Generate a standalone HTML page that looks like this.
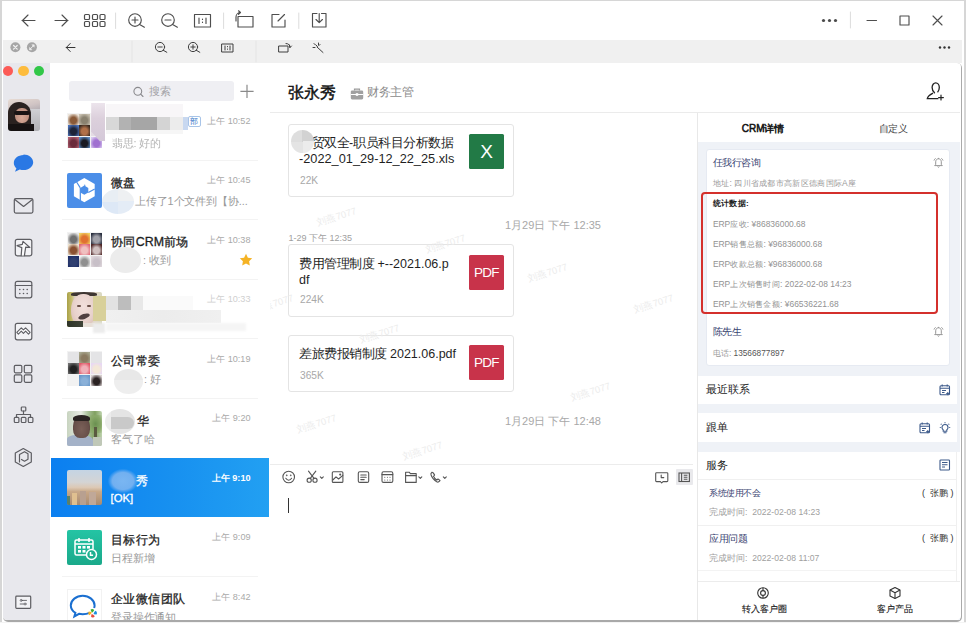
<!DOCTYPE html>
<html><head><meta charset="utf-8">
<style>
*{box-sizing:border-box}
html,body{margin:0;padding:0;width:966px;height:623px;overflow:hidden;background:#fff;font-family:"Liberation Sans",sans-serif;color:#222}
.a{position:absolute}
svg{position:absolute;overflow:visible}
.t{position:absolute;white-space:nowrap;line-height:1}
</style></head><body>
<!-- outer borders -->
<div class="a" style="left:0;top:0;width:966px;height:1.2px;background:#d6d6d6"></div>
<div class="a" style="left:0;top:0;width:1.6px;height:623px;background:#d6d6d6"></div>
<div class="a" style="left:964.4px;top:0;width:1.6px;height:623px;background:#d6d6d6"></div>

<!-- toolbar 1 -->
<svg width="966" height="40" style="left:0;top:0" fill="none" stroke="#4e4e4e" stroke-width="1.15" stroke-linecap="round" stroke-linejoin="round">
  <path d="M22 20.5h13M28 15l-5.5 5.5L28 26"/>
  <path d="M55 20.5h13M62 15l5.5 5.5L62 26"/>
  <g stroke-width="1.2"><rect x="84.5" y="14.5" width="5" height="5" rx="1"/><rect x="92.5" y="14.5" width="5" height="5" rx="1"/><rect x="100" y="14.5" width="5" height="5" rx="1"/>
  <rect x="84.5" y="21.5" width="5" height="5" rx="1"/><rect x="92.5" y="21.5" width="5" height="5" rx="1"/><rect x="100" y="21.5" width="5" height="5" rx="1"/></g>
  <path d="M115.6 13v15.5M223.6 13v15.5M298.8 13v15.5M850.4 12v16" stroke="#dcdcdc" stroke-width="1"/>
  <circle cx="135" cy="20" r="6.3"/><path d="M139.6 24.6l4.8 2.6M132 20h6M135 17v6"/>
  <circle cx="168" cy="20" r="6.3"/><path d="M172.6 24.6l4.8 2.6M165 20h6"/>
  <rect x="194.5" y="14.5" width="16" height="12.5"/><path d="M199 18v5.5M206 18v5.5M202.5 19v.5M202.5 22v.5"/>
  <rect x="238" y="16.5" width="15" height="10.5"/><path d="M236 21v-4c0-2.5 2-4.5 4.5-4.5M238.5 10.8l2 1.7-2 1.8"/>
  <path d="M279 14.5h-7v12.5h13v-7M278 21l6.5-6.5"/>
  <path d="M317 13.5h-4.5v13.5h13.5v-13.5h-4.5M319.2 13.5v9M316 19.5l3.2 3.2 3.2-3.2"/>
  <g fill="#4a4a4a" stroke="none"><circle cx="823.5" cy="20.5" r="1.6"/><circle cx="829.5" cy="20.5" r="1.6"/><circle cx="835.5" cy="20.5" r="1.6"/></g>
  <path d="M867 20.5h9.5"/>
  <rect x="900" y="16" width="9" height="9"/>
  <path d="M933 16l9 9M942 16l-9 9"/>
</svg>

<!-- toolbar 2 -->
<div class="a" style="left:3px;top:40px;width:959px;height:23px;background:#f0f0f0"></div>
<svg width="966" height="70" style="left:0;top:0" fill="none" stroke="#3e3e3e" stroke-width="1" stroke-linecap="round" stroke-linejoin="round">
  <circle cx="15.4" cy="47.3" r="5" fill="#a6a6a6" stroke="none"/><path d="M13.6 45.5l3.6 3.6M17.2 45.5l-3.6 3.6" stroke="#f0f0f0" stroke-width="1.3"/>
  <circle cx="31.9" cy="47.3" r="5" fill="#a6a6a6" stroke="none"/><path d="M30 49.2l3.8-3.8" stroke="#f0f0f0" stroke-width="1"/><path d="M32.2 44.8h2v2zM31.6 49.8h-2v-2z" fill="#f0f0f0" stroke="#f0f0f0" stroke-width=".6"/>
  <path d="M66.3 47.5h8.7M70.2 43.5l-3.9 4 3.9 4" stroke="#333" stroke-width="1"/>
  <path d="M132 41v21M256 41v21" stroke="#e4e4e4" stroke-width="1"/>
  <circle cx="160" cy="47" r="4.6"/><path d="M163.3 50.3l3.5 2M157.8 47h4.4"/>
  <circle cx="193" cy="47" r="4.6"/><path d="M196.3 50.3l3.5 2M190.8 47h4.4M193 44.8v4.4"/>
  <rect x="222" y="44" width="11" height="8"/><path d="M225 46v4M230 46v4M227.5 46.5v.3M227.5 49v.3"/>
  <rect x="279" y="46" width="9" height="6"/><path d="M286 43.5c2.5 0 4 1.5 4 4M289.5 45l.5 2.5 1.5-1.5"/>
  <path d="M317 47l6 5.5M314 43.5l1.5 1.5M318.5 43v2M313 47.5h2M316 45l1.5 1.5M320 44.5l-1 1"/>
  <g fill="#333" stroke="none"><circle cx="940" cy="47.5" r="1.2"/><circle cx="944.5" cy="47.5" r="1.2"/><circle cx="949" cy="47.5" r="1.2"/></g>
</svg>

<!-- app window -->
<div class="a" style="left:3px;top:63px;width:959px;height:559px;background:#aaaaaa;border-radius:0 5px 5px 5px"></div>
<div class="a" id="app" style="left:3px;top:63px;width:957.5px;height:557px;background:#fff;border-radius:0 4px 4px 4px;overflow:hidden">
</div>

<!-- sidebar -->
<div class="a" style="left:3px;top:63px;width:47px;height:557px;background:#e8e8ed;border-radius:0 0 0 4px"></div>
<div class="a" style="left:3px;top:66px;width:10px;height:11px;overflow:hidden"><div class="a" style="left:-0.5px;top:0.2px;width:10.3px;height:10.3px;border-radius:50%;background:#fc5b57"></div></div>
<div class="a" style="left:18.3px;top:66.2px;width:10.3px;height:10.3px;border-radius:50%;background:#fdbc3e"></div>
<div class="a" style="left:34px;top:66.2px;width:10.3px;height:10.3px;border-radius:50%;background:#31c748"></div>
<!-- user avatar -->
<div class="a" style="left:8px;top:98.5px;width:31.5px;height:32px;border-radius:3px;overflow:hidden;background:linear-gradient(165deg,#e8dcd4 0%,#d0c4c4 30%,#a8a4ac 55%,#c0c4cc 80%,#d8dce4 100%)">
 <div class="a" style="left:0;top:0;width:31.5px;height:32px;filter:blur(0.6px)">
  <div class="a" style="left:21px;top:10px;width:11px;height:22px;background:linear-gradient(180deg,#d0d0d4,#b0b0b4)"></div>
  <div class="a" style="left:0;top:3px;width:23px;height:29px;background:#2a2220;border-radius:11px 12px 3px 3px"></div>
  <div class="a" style="left:7px;top:9px;width:14px;height:15px;background:radial-gradient(ellipse at 50% 65%,#d8aa98 0,#b88a7a 80%);border-radius:45%"></div>
  <div class="a" style="left:6px;top:12px;width:16px;height:4.5px;background:#1a1414;border-radius:2px"></div>
  <div class="a" style="left:0;top:25px;width:26px;height:7px;background:#161212"></div>
 </div>
</div>
<svg width="60" height="623" style="left:0;top:0" fill="none" stroke="#5d5d62" stroke-width="1.2" stroke-linejoin="round" stroke-linecap="round">
  <path d="M23.5 154.5c5.4 0 9.7 3.5 9.7 7.8s-4.3 7.8-9.7 7.8c-1.3 0-2.6-.2-3.7-.6l-4.8 2.3 1.4-3.6c-1.6-1.4-2.6-3.3-2.6-5.3 0-4.3 4.3-7.9 9.7-7.9z" fill="#2a78e4" stroke="none"/>
  <rect x="14.3" y="198.6" width="18.6" height="14.5" rx="1.5"/><path d="M14.8 199.5l8.8 7 8.8-7"/>
  <rect x="15.3" y="239.3" width="16.5" height="16.5" rx="2" fill="#f2f2f5"/><path d="M21.2 255.6L21.8 247.6L17 245.7L22.3 244.3L23 241.4L29.8 247.5L25.7 247.2L24.4 255.6" fill="#fbfbfc"/>
  <rect x="15.3" y="281.3" width="16.5" height="16.5" rx="2"/><path d="M15.3 285.5h16.5"/><g fill="#5d5d62" stroke="none"><circle cx="19.8" cy="289.5" r=".8"/><circle cx="23.5" cy="289.5" r=".8"/><circle cx="27.2" cy="289.5" r=".8"/><circle cx="19.8" cy="293.5" r=".8"/><circle cx="23.5" cy="293.5" r=".8"/><circle cx="27.2" cy="293.5" r=".8"/></g>
  <rect x="15.3" y="323.3" width="16.5" height="16.5" rx="2" fill="#f2f2f5"/><path d="M16.8 332.4L21.3 327.8L23.4 329.9L25.6 327.8L30.1 332.4L28.5 334.1L25.6 331.2L23.4 333.4L21.3 331.2L18.4 334.1Z" fill="#fbfbfc" stroke-width="1.1"/>
  <rect x="14.3" y="365.3" width="7.5" height="7.5" rx="1.2"/><rect x="24.3" y="365.3" width="7.5" height="7.5" rx="1.2"/><rect x="14.3" y="374.8" width="7.5" height="7.5" rx="1.2"/><rect x="24.3" y="374.8" width="7.5" height="7.5" rx="1.2"/>
  <rect x="21.3" y="407" width="4.5" height="4" rx=".8"/><path d="M23.5 411v3.5M16.5 417v-2.5h14v2.5"/><rect x="14.3" y="417.3" width="4.6" height="5.2" rx="1"/><rect x="21.3" y="417.3" width="4.6" height="5.2" rx="1"/><rect x="28.3" y="417.3" width="4.6" height="5.2" rx="1"/>
  <path d="M23.3 448.5l8 4.5v9l-8 4.5-8-4.5v-9z"/><path d="M19.5 462v-7.5l5-2.8 3.5 2v5.5l-3.5 2-3-1.7"/>
  <rect x="15.8" y="596.2" width="14.9" height="12.2" rx="0.8" fill="#f3f3f6"/><circle cx="21.2" cy="600.4" r="1" stroke-width=".8"/><path d="M22.2 600.4h4.3M20.2 604h3.7" stroke-width=".9"/><circle cx="25.1" cy="604" r="1" stroke-width=".8"/>
</svg>

<div class="a" style="left:50px;top:63px;width:219.5px;height:557px;background:#fff"></div>
<div class="a" style="left:269.5px;top:63px;width:0.8px;height:557px;background:#ececec"></div>
<div class="a" style="left:68.7px;top:81.4px;width:165.3px;height:19.8px;background:#efeff3;border-radius:3px"></div>
<svg width="20" height="20" style="left:130px;top:82px" fill="none" stroke="#8a8a8e" stroke-width="1.1"><circle cx="7.8" cy="9.3" r="3.9"/><path d="M10.7 12.2l2.3 2.3" stroke-linecap="round"/></svg>
<div class="t" style="left:149px;top:85.80px;font-size:11px;line-height:11px;color:#a2a2a6;font-weight:400;">搜索</div>
<svg width="20" height="20" style="left:237px;top:81px" fill="none" stroke="#8a8a8a" stroke-width="1.2"><path d="M10 3.8v13.2M3.4 10.4h13.2"/></svg>
<div class="a" style="left:62px;top:159.7px;width:196px;height:0.8px;background:#f3f3f3"></div>
<div class="a" style="left:62px;top:219.2px;width:196px;height:0.8px;background:#f3f3f3"></div>
<div class="a" style="left:62px;top:278.7px;width:196px;height:0.8px;background:#f3f3f3"></div>
<div class="a" style="left:62px;top:338.2px;width:196px;height:0.8px;background:#f3f3f3"></div>
<div class="a" style="left:62px;top:397.7px;width:196px;height:0.8px;background:#f3f3f3"></div>
<div class="a" style="left:62px;top:576.2px;width:196px;height:0.8px;background:#f3f3f3"></div>
<div class="a" style="left:62px;top:635.7px;width:196px;height:0.8px;background:#f3f3f3"></div>
<div class="a" style="left:67px;top:113.0px;width:35px;height:35px;background:#f2f2f2"><div class="a" style="left:0.5px;top:0.5px;width:11px;height:11px;background:radial-gradient(ellipse 60% 65% at 50% 58%,#8a5a38 0,#8a5a38 45%,#ece4da 100%)"></div><div class="a" style="left:12.0px;top:0.5px;width:11px;height:11px;background:radial-gradient(ellipse 60% 65% at 50% 58%,#8a8270 0,#8a8270 45%,#c8c0b0 100%)"></div><div class="a" style="left:23.5px;top:0.5px;width:11px;height:11px;background:#e8e0e4"></div><div class="a" style="left:0.5px;top:12.0px;width:11px;height:11px;background:radial-gradient(ellipse 60% 65% at 50% 58%,#1e2438 0,#1e2438 45%,#4a70b8 100%)"></div><div class="a" style="left:12.0px;top:12.0px;width:11px;height:11px;background:radial-gradient(ellipse 60% 65% at 50% 58%,#b07048 0,#b07048 45%,#3a2a20 100%)"></div><div class="a" style="left:23.5px;top:12.0px;width:11px;height:11px;background:#e4dce4"></div><div class="a" style="left:0.5px;top:23.5px;width:11px;height:11px;background:radial-gradient(ellipse 60% 65% at 50% 58%,#6a2a3a 0,#6a2a3a 45%,#b06070 100%)"></div><div class="a" style="left:12.0px;top:23.5px;width:11px;height:11px;background:radial-gradient(ellipse 60% 65% at 50% 58%,#1a1a22 0,#1a1a22 45%,#5a88c0 100%)"></div><div class="a" style="left:23.5px;top:23.5px;width:11px;height:11px;background:radial-gradient(ellipse 60% 65% at 50% 58%,#a070d0 0,#a070d0 45%,#d8c8f0 100%)"></div></div>
<div class="a" style="left:91.2px;top:103.0px;width:14.3px;height:38px;background:linear-gradient(180deg,#ece4ec,#dcd0dc 40%,#d4c8d8);clip-path:polygon(0 0,100% 0,100% 100%,60% 100%,0 75%)"></div>
<div class="a" style="left:105.5px;top:116.8px;width:77.5px;height:13px;background:linear-gradient(90deg,#d8d8d8 0,#d8d8d8 16.7%,#b2b2b2 16.7%,#b2b2b2 33%,#a6a6a6 33%,#a6a6a6 66.5%,#d4d4d4 66.5%,#d4d4d4 83%,#ececec 83%);filter:blur(0.4px)"></div>
<div class="a" style="left:105.5px;top:103.5px;width:77.5px;height:13.3px;background:#f8f6f8"></div>
<div class="a" style="left:105.5px;top:129.8px;width:77.5px;height:4px;background:#f6f6f6"></div>
<div class="a" style="left:183px;top:116.8px;width:5px;height:13px;background:#c8d8f0"></div>
<div class="a" style="left:187.5px;top:116.0px;width:13.5px;height:10.5px;border:1px solid #a8c4e8;border-radius:2px;background:#fff"></div>
<div class="t" style="left:190px;top:117.75px;font-size:7.5px;line-height:7.5px;color:#3a78c8;font-weight:400;">部</div>
<div class="t" style="right:715.5px;top:116.65px;font-size:9.1px;line-height:9.1px;color:#a9a9a9;font-weight:400;">上午 10:52</div>
<div class="t" style="left:111.5px;top:137.60px;font-size:10.8px;line-height:10.8px;color:#b4b4b4;font-weight:400;filter:blur(0.7px)">翡思: 好的</div>
<div class="a" style="left:67px;top:172.7px;width:35px;height:35px;background:#4b8ee8;border-radius:2px"></div>
<svg width="35" height="35" style="left:67px;top:172.7px"><path d="M17.3 5l10.4 6v12.2l-10.4 6-10.4-6V11z" fill="#fff"/><path d="M17.3 12.6l4 2.3v4.6l-4 2.3-4-2.3v-4.6z" fill="#4b8ee8"/><path d="M13.3 14.9v13M13.3 14.9L9.6 9M21.3 19.5l6.4-3.6M17.3 12.6l1 -.6" stroke="#4b8ee8" stroke-width="1.2" fill="none"/></svg>
<div class="t" style="left:111px;top:176.80px;font-size:12.4px;line-height:12.4px;color:#1f1f1f;font-weight:400;;-webkit-text-stroke:0.3px #1f1f1f"><span style="font-size:12px;letter-spacing:0.4px">微盘</span></div>
<div class="t" style="right:715.5px;top:176.15px;font-size:9.1px;line-height:9.1px;color:#a9a9a9;font-weight:400;">上午 10:45</div>
<div class="t" style="left:135px;top:195.90px;font-size:10.8px;line-height:10.8px;color:#9a9a9a;font-weight:400;"><span style="font-size:11px;letter-spacing:-0.15px">上传了</span>1<span style="font-size:11px;letter-spacing:-0.15px">个文件到【协</span>...</div>
<div class="a" style="left:102px;top:188.5px;width:32px;height:25px;border-radius:50%;background:conic-gradient(#eef0f2 0 90deg,#e4ecf6 90deg 180deg,#dde8f6 180deg 270deg,#e8eef4 270deg);filter:blur(0.5px)"></div>
<div class="a" style="left:67px;top:232.2px;width:35px;height:35px;background:#f2f2f2"><div class="a" style="left:0.5px;top:0.5px;width:11px;height:11px;background:radial-gradient(ellipse 60% 65% at 50% 58%,#707070 0,#707070 45%,#e8e8e8 100%)"></div><div class="a" style="left:12.0px;top:0.5px;width:11px;height:11px;background:radial-gradient(ellipse 60% 65% at 50% 58%,#e07030 0,#e07030 45%,#f0d060 100%)"></div><div class="a" style="left:23.5px;top:0.5px;width:11px;height:11px;background:radial-gradient(ellipse 60% 65% at 50% 58%,#a0a0a8 0,#a0a0a8 45%,#2a3040 100%)"></div><div class="a" style="left:0.5px;top:12.0px;width:11px;height:11px;background:radial-gradient(ellipse 60% 65% at 50% 58%,#8a5030 0,#8a5030 45%,#ece0cc 100%)"></div><div class="a" style="left:12.0px;top:12.0px;width:11px;height:11px;background:radial-gradient(ellipse 60% 65% at 50% 58%,#f0c0c0 0,#f0c0c0 45%,#e06878 100%)"></div><div class="a" style="left:23.5px;top:12.0px;width:11px;height:11px;background:radial-gradient(ellipse 60% 65% at 50% 58%,#d0c0c0 0,#d0c0c0 45%,#502828 100%)"></div><div class="a" style="left:0.5px;top:23.5px;width:11px;height:11px;background:radial-gradient(ellipse 60% 65% at 50% 58%,#304070 0,#304070 45%,#1e2e68 100%)"></div><div class="a" style="left:12.0px;top:23.5px;width:11px;height:11px;background:radial-gradient(ellipse 60% 65% at 50% 58%,#909090 0,#909090 45%,#f0f0f0 100%)"></div><div class="a" style="left:23.5px;top:23.5px;width:11px;height:11px;background:radial-gradient(ellipse 60% 65% at 50% 58%,#c8c0c8 0,#c8c0c8 45%,#e0d8dc 100%)"></div></div>
<div class="t" style="left:111px;top:236.30px;font-size:12.4px;line-height:12.4px;color:#1f1f1f;font-weight:400;;-webkit-text-stroke:0.3px #1f1f1f"><span style="font-size:12px;letter-spacing:0.4px">协同</span>CRM<span style="font-size:12px;letter-spacing:0.4px">前场</span></div>
<div class="t" style="right:715.5px;top:235.65px;font-size:9.1px;line-height:9.1px;color:#a9a9a9;font-weight:400;">上午 10:38</div>
<div class="t" style="left:143px;top:255.40px;font-size:10.8px;line-height:10.8px;color:#9a9a9a;font-weight:400;">: <span style="font-size:11px;letter-spacing:-0.15px">收到</span></div>
<div class="a" style="left:109.8px;top:247.3px;width:31.6px;height:25.3px;border-radius:50%;background:#ececec;filter:blur(0.4px)"></div>
<svg width="14" height="14" style="left:239px;top:253.0px"><path d="M7 0.8l1.9 3.9 4.3.6-3.1 3 .7 4.3L7 10.6l-3.8 2 .7-4.3-3.1-3 4.3-.6z" fill="#f5b324"/></svg>
<div class="a" style="left:67px;top:291.5px;width:35px;height:35px;border-radius:2px;overflow:hidden;filter:blur(0.35px);background:linear-gradient(90deg,#a8a048 0,#c8c070 14%,#d8cfc0 22%,#e4d4cc 60%,#e0d8c8 85%,#d8d8c0 100%)">
<div class="a" style="left:4px;top:0;width:26px;height:4px;background:#3e3632;border-radius:50% 50% 20% 20%"></div>
<div class="a" style="left:4px;top:2px;width:25px;height:32px;background:radial-gradient(ellipse at 50% 40%,#f2e0dc 0,#e8d2cc 55%,#d4b8ae 100%);border-radius:48% 48% 45% 45%"></div>
<div class="a" style="left:10px;top:13.5px;width:3.5px;height:1.8px;background:#6a5048;border-radius:1px"></div><div class="a" style="left:20px;top:13.5px;width:3.5px;height:1.8px;background:#6a5048;border-radius:1px"></div>
<div class="a" style="left:11px;top:22px;width:12px;height:5px;background:#504040;border-radius:50%;transform:rotate(-18deg)"></div>
<div class="a" style="left:0;top:29px;width:16px;height:6px;background:linear-gradient(90deg,#2e3428,#404438)"></div>
<div class="a" style="left:16px;top:31px;width:12px;height:4px;background:#e8e0d8"></div>
</div><div class="a" style="left:93px;top:296.0px;width:13px;height:25px;background:#d8d09a;filter:blur(0.4px)"></div>
<div class="a" style="left:93px;top:323.0px;width:12px;height:10px;background:#ececec;filter:blur(0.8px)"></div>
<div class="a" style="left:105.8px;top:296.0px;width:37.6px;height:13.5px;background:linear-gradient(90deg,#e2e2e2 0,#e2e2e2 32%,#bdbdbd 32%,#bdbdbd 67%,#e8e8e8 67%);filter:blur(0.5px)"></div>
<div class="a" style="left:143.4px;top:296.0px;width:50px;height:13.5px;background:#fafafa;filter:blur(0.5px)"></div>
<div class="a" style="left:105.8px;top:309.5px;width:115px;height:13px;background:linear-gradient(90deg,#f0f0f0,#ececec 50%,#f0f0f0);filter:blur(0.6px)"></div>
<div class="a" style="left:105.8px;top:322.5px;width:140px;height:8px;background:#f5f5f5;filter:blur(0.8px)"></div>
<div class="t" style="right:715.5px;top:295.15px;font-size:9.1px;line-height:9.1px;color:#cfcfcf;font-weight:400;">上午 10:33</div>
<div class="a" style="left:67px;top:351.2px;width:35px;height:35px;background:#f2f2f2"><div class="a" style="left:0.5px;top:0.5px;width:11px;height:11px;background:#e4e4e6"></div><div class="a" style="left:12.0px;top:0.5px;width:11px;height:11px;background:radial-gradient(ellipse 60% 65% at 50% 58%,#8a7a60 0,#8a7a60 45%,#a8a890 100%)"></div><div class="a" style="left:23.5px;top:0.5px;width:11px;height:11px;background:#e4e4e6"></div><div class="a" style="left:0.5px;top:12.0px;width:11px;height:11px;background:radial-gradient(ellipse 60% 65% at 50% 58%,#202020 0,#202020 45%,#707070 100%)"></div><div class="a" style="left:12.0px;top:12.0px;width:11px;height:11px;background:radial-gradient(ellipse 60% 65% at 50% 58%,#f0b0b8 0,#f0b0b8 45%,#e05868 100%)"></div><div class="a" style="left:23.5px;top:12.0px;width:11px;height:11px;background:radial-gradient(ellipse 60% 65% at 50% 58%,#f4e8d8 0,#f4e8d8 45%,#e8d8f4 100%)"></div><div class="a" style="left:0.5px;top:23.5px;width:11px;height:11px;background:radial-gradient(ellipse 60% 65% at 50% 58%,#b89070 0,#b89070 45%,linear-gradient(#d8c8b8,#a08060) 100%)"></div><div class="a" style="left:12.0px;top:23.5px;width:11px;height:11px;background:radial-gradient(ellipse 60% 65% at 50% 58%,#8ab0d8 0,#8ab0d8 45%,#6a98c8 100%)"></div><div class="a" style="left:23.5px;top:23.5px;width:11px;height:11px;background:radial-gradient(ellipse 60% 65% at 50% 58%,#2a2222 0,#2a2222 45%,#d8d0d0 100%)"></div></div>
<div class="t" style="left:111px;top:355.30px;font-size:12.4px;line-height:12.4px;color:#1f1f1f;font-weight:400;;-webkit-text-stroke:0.3px #1f1f1f"><span style="font-size:12px;letter-spacing:0.4px">公司常委</span></div>
<div class="t" style="right:715.5px;top:354.65px;font-size:9.1px;line-height:9.1px;color:#a9a9a9;font-weight:400;">上午 10:19</div>
<div class="t" style="left:144px;top:374.40px;font-size:10.8px;line-height:10.8px;color:#9a9a9a;font-weight:400;">: <span style="font-size:11px;letter-spacing:-0.15px">好</span></div>
<div class="a" style="left:114px;top:369.0px;width:29px;height:24.5px;border-radius:50%;background:linear-gradient(180deg,#e8e8e8 0,#e8e8e8 45%,#eeeeee 45%);filter:blur(0.3px)"></div>
<div class="a" style="left:67px;top:410.5px;width:35px;height:35px;border-radius:2px;overflow:hidden;background:linear-gradient(90deg,#c8d4c0 0,#e8ece4 40%,#a8c098 60%,#80a060 80%,#c0d4b0 100%)">
<div class="a" style="left:0;top:0;width:35px;height:35px;filter:blur(0.5px)">
<div class="a" style="left:22px;top:4px;width:13px;height:18px;background:radial-gradient(ellipse,#6a9050 0,#88a868 60%,rgba(200,212,176,0) 100%)"></div>
<div class="a" style="left:27px;top:16px;width:3px;height:12px;background:#5a5a40"></div>
<div class="a" style="left:0;top:24px;width:26px;height:11px;background:#a4b2c8;border-radius:35% 45% 0 0"></div>
<div class="a" style="left:6px;top:5px;width:17px;height:22px;background:radial-gradient(ellipse at 50% 60%,#7a6058 0,#68504a 60%,#4a3a36 100%);border-radius:45% 45% 40% 40%"></div>
<div class="a" style="left:6px;top:4px;width:17px;height:6px;background:#2a2422;border-radius:50% 50% 20% 20%"></div>
<div class="a" style="left:26px;top:26px;width:9px;height:9px;background:#c0c8b8"></div>
</div>
</div><div class="t" style="left:137px;top:414.80px;font-size:12.4px;line-height:12.4px;color:#1f1f1f;font-weight:400;;-webkit-text-stroke:0.3px #1f1f1f"><span style="font-size:12px;letter-spacing:0.4px">华</span></div>
<div class="a" style="left:104.7px;top:409.3px;width:30px;height:25px;border-radius:50%;background:linear-gradient(90deg,#ececec 0,#ececec 20%,#e4e4e4 20%);filter:blur(0.4px)"></div>
<div class="a" style="left:111px;top:417.0px;width:23px;height:11.6px;background:#c9c9c9;border-radius:0 6px 6px 0;filter:blur(0.4px)"></div>
<div class="t" style="right:715.5px;top:414.15px;font-size:9.1px;line-height:9.1px;color:#a9a9a9;font-weight:400;">上午 9:20</div>
<div class="t" style="left:111px;top:433.90px;font-size:10.8px;line-height:10.8px;color:#9a9a9a;font-weight:400;"><span style="font-size:11px;letter-spacing:-0.15px">客气了哈</span></div>
<div class="a" style="left:50.8px;top:458.0px;width:218.5px;height:58.7px;background:linear-gradient(90deg,#0b7ff0 0%,#1790f0 55%,#22a0f2 100%)"></div>
<div class="a" style="left:67px;top:470.0px;width:35px;height:35px;border-radius:2px;overflow:hidden;background:linear-gradient(180deg,#c4d4e4 0%,#d4d4d4 35%,#dcc8b4 50%,#c8a888 62%,#a88a70 100%)">
<div class="a" style="left:5px;top:23px;width:5px;height:12px;background:#e0c090"></div><div class="a" style="left:13px;top:21px;width:6px;height:14px;background:#b8a090"></div><div class="a" style="left:22px;top:22px;width:7px;height:13px;background:#c0a898"></div><div class="a" style="left:0;top:26px;width:3px;height:9px;background:#5a8068"></div>
</div><div class="t" style="left:136px;top:474.50px;font-size:12.4px;line-height:12.4px;color:#fff;font-weight:400;;-webkit-text-stroke:0.3px #fff"><span style="font-size:12px;letter-spacing:0.4px">秀</span></div>
<div class="a" style="left:108px;top:468.5px;width:30px;height:24px;background:radial-gradient(ellipse,#7ab6f2 0,#72b0f0 50%,rgba(23,144,240,0) 72%)"></div>
<div class="t" style="left:110.5px;top:493.10px;font-size:11.4px;line-height:11.4px;color:#fff;font-weight:400;-webkit-text-stroke:0.3px #fff">[OK]</div>
<div class="t" style="right:715.5px;top:473.65px;font-size:9.1px;line-height:9.1px;color:#fff;font-weight:700;">上午 9:10</div>
<div class="a" style="left:67px;top:529.5px;width:35px;height:35px;background:linear-gradient(180deg,#24c4a4,#1aa98a);border-radius:2px"></div>
<svg width="35" height="35" style="left:67px;top:529.5px" fill="none" stroke="#fff" stroke-width="1.5"><path d="M21 25H9.5c-.8 0-1.5-.7-1.5-1.5V11.5c0-.8.7-1.5 1.5-1.5h15c.8 0 1.5.7 1.5 1.5V19"/><path d="M8 14h18M12 8v4M22 8v4"/><g fill="#fff" stroke="none"><rect x="11" y="16" width="3" height="2.6"/><rect x="15.5" y="16" width="3" height="2.6"/><rect x="20" y="16" width="3" height="2.6"/><rect x="11" y="20" width="3" height="2.6"/><rect x="15.5" y="20" width="3" height="2.6"/></g><circle cx="24.5" cy="24.5" r="5" fill="#1eb090"/><path d="M23.5 22v3.2h2.6"/></svg>
<div class="t" style="left:111px;top:533.80px;font-size:12.4px;line-height:12.4px;color:#1f1f1f;font-weight:400;;-webkit-text-stroke:0.3px #1f1f1f"><span style="font-size:12px;letter-spacing:0.4px">目标行为</span></div>
<div class="t" style="right:715.5px;top:533.15px;font-size:9.1px;line-height:9.1px;color:#a9a9a9;font-weight:400;">上午 9:09</div>
<div class="t" style="left:111px;top:552.90px;font-size:10.8px;line-height:10.8px;color:#9a9a9a;font-weight:400;"><span style="font-size:11px;letter-spacing:-0.15px">日程新增</span></div>
<div class="a" style="left:67px;top:589.0px;width:35px;height:35px;border:0.6px solid #f2f2f2"></div>
<svg width="35" height="35" style="left:67px;top:589.0px" fill="none" stroke="#1a6fd0" stroke-width="2"><path d="M22.5 23.8c-1.9.9-4.3 1.4-6.8 1.4-1.3 0-2.5-.1-3.7-.4l-4.6 2.6 1-3.6C5.6 22 3.8 19.4 3.8 16.4c0-5.3 5.4-9.6 11.9-9.6s11.9 4.3 11.9 9.6c0 .9-.2 1.8-.5 2.6"/><g stroke="none"><path d="M23.6 20.6c1.2-.9 2.9-.6 3.6.6l-1.6 2.4c-.8-.2-1.6-1-2-3z" fill="#3cb034"/><path d="M28.6 21.8c1.3.8 1.8 2.5 1 3.7l-2.9-.2c-.2-.8.2-1.9 1.9-3.5z" fill="#1a8ee0"/><path d="M27.8 27.2c-.8 1.3-2.5 1.7-3.7.9l.3-2.9c.8-.2 1.9.3 3.4 2z" fill="#e84a3a"/><path d="M22.4 26.2c-1.2-.9-1.5-2.6-.6-3.7l2.8.4c.2.8-.3 1.9-2.2 3.3z" fill="#f5b020"/></g></svg>
<div class="t" style="left:111px;top:593.30px;font-size:12.4px;line-height:12.4px;color:#1f1f1f;font-weight:400;;-webkit-text-stroke:0.3px #1f1f1f"><span style="font-size:12px;letter-spacing:0.4px">企业微信团队</span></div>
<div class="t" style="right:715.5px;top:592.65px;font-size:9.1px;line-height:9.1px;color:#a9a9a9;font-weight:400;">上午 8:42</div>
<div class="t" style="left:111px;top:612.40px;font-size:10.8px;line-height:10.8px;color:#9a9a9a;font-weight:400;"><span style="font-size:11px;letter-spacing:-0.15px">登录操作通知</span></div>
<div class="a" style="left:270px;top:63px;width:686px;height:49.5px;background:#fff"></div>
<div class="a" style="left:270px;top:112.2px;width:690px;height:0.9px;background:#ebebeb"></div>
<div class="t" style="left:288px;top:84.50px;font-size:16px;line-height:16px;color:#111;font-weight:400;-webkit-text-stroke:0.45px #111">张永秀</div>
<svg width="14" height="14" style="left:350px;top:87px"><path d="M4.5 3.5V2.2h5v1.3" fill="none" stroke="#9a9a9a" stroke-width="1.2"/><rect x="0.8" y="3.4" width="12.4" height="9" rx="1.3" fill="#a0a0a0"/><rect x="0.8" y="7" width="12.4" height="1" fill="#fff"/><rect x="5.8" y="6.2" width="2.4" height="2.6" fill="#fff"/></svg>
<div class="t" style="left:367px;top:87.25px;font-size:11.5px;line-height:11.5px;color:#8a8a8a;font-weight:400;"><span style="font-size:12px;letter-spacing:-0.4px">财务主管</span></div>
<svg width="20" height="20" style="left:925px;top:81px" fill="none" stroke="#222" stroke-width="1.3" stroke-linecap="round"><path d="M9.5 11.8c-1.4-1.3-2.4-3.2-2.4-5.3 0-2.6 1.6-4.6 3.6-4.6s3.6 2 3.6 4.6c0 1.6-.6 3.1-1.5 4.3M7.6 12.3c-2.4 1.2-4.9 3-5.3 5.4h10.6"/><path d="M16 14.2v4.8M13.6 16.6h4.8" stroke-width="1.2"/></svg>
<div class="a" style="left:270px;top:113px;width:427px;height:351px;background:#fff"></div>
<div class="a" style="left:287.5px;top:124.4px;width:226.5px;height:72.2px;background:#fff;border:1px solid #e4e4e4;border-radius:3px"></div>
<div class="t" style="left:299px;top:136.55px;font-size:12.5px;line-height:12.5px;color:#1f1f1f;font-weight:400;"><span style="font-size:13px;letter-spacing:-0.5px">工贸双全</span>-<span style="font-size:13px;letter-spacing:-0.5px">职员科目分析数据</span></div>
<div class="t" style="left:299px;top:152.93px;font-size:12.75px;line-height:12.75px;color:#1f1f1f;font-weight:400;">-2022_01_29-12_22_25.xls</div>
<div class="t" style="left:300px;top:175.70px;font-size:10.2px;line-height:10.2px;color:#a8a8a8;font-weight:400;">22K</div>
<div class="a" style="left:291px;top:130.4px;width:23px;height:23px;border-radius:50%;background:conic-gradient(#d2d2d2 0 90deg,#ececec 90deg 180deg,#e4e4e4 180deg 270deg,#dedede 270deg)"></div>
<div class="a" style="left:469.3px;top:134.4px;width:34.8px;height:34.8px;background:#227a46;color:#fff;font-size:19px;line-height:35.5px;text-align:center;border-radius:1.5px">X</div><div class="t" style="right:365px;top:219.90px;font-size:11px;line-height:11px;color:#a8a8a8;font-weight:400;">1月29日 下午 12:35</div>
<div class="t" style="left:288.5px;top:234.00px;font-size:9px;line-height:9px;color:#a0a0a0;font-weight:400;">1-29 下午 12:35</div>
<div class="a" style="left:287.5px;top:244.4px;width:226.5px;height:72.6px;background:#fff;border:1px solid #e4e4e4;border-radius:3px"></div>
<div class="t" style="left:299px;top:257.75px;font-size:12.5px;line-height:12.5px;color:#1f1f1f;font-weight:400;"><span style="font-size:13px;letter-spacing:-0.5px">费用管理制度</span> +--2021.06.p</div>
<div class="t" style="left:299px;top:274.05px;font-size:12.5px;line-height:12.5px;color:#1f1f1f;font-weight:400;">df</div>
<div class="t" style="left:300px;top:295.40px;font-size:10.2px;line-height:10.2px;color:#a8a8a8;font-weight:400;">224K</div>
<div class="a" style="left:469px;top:255px;width:35.2px;height:34.6px;background:#c8334a;color:#fff;font-size:13.5px;letter-spacing:-0.7px;text-indent:-0.5px;line-height:36.6px;text-align:center;border-radius:1.5px">PDF</div><div class="a" style="left:287.5px;top:334.8px;width:226.5px;height:56.8px;background:#fff;border:1px solid #e4e4e4;border-radius:3px"></div>
<div class="t" style="left:299px;top:348.05px;font-size:12.5px;line-height:12.5px;color:#1f1f1f;font-weight:400;"><span style="font-size:13px;letter-spacing:-0.5px">差旅费报销制度</span> 2021.06.pdf</div>
<div class="t" style="left:300px;top:370.60px;font-size:10.2px;line-height:10.2px;color:#a8a8a8;font-weight:400;">365K</div>
<div class="a" style="left:469px;top:345.4px;width:35.2px;height:34.6px;background:#c8334a;color:#fff;font-size:13.5px;letter-spacing:-0.7px;text-indent:-0.5px;line-height:36.6px;text-align:center;border-radius:1.5px">PDF</div><div class="t" style="right:365px;top:415.90px;font-size:11px;line-height:11px;color:#a8a8a8;font-weight:400;">1月29日 下午 12:48</div>
<div class="a" style="left:270px;top:113px;width:426px;height:351px;overflow:hidden"><div class="t" style="left:46px;top:99px;font-size:9.5px;line-height:10px;color:#ececec;transform:rotate(-18deg)">刘燕7077</div>
<div class="t" style="left:155px;top:126px;font-size:9.5px;line-height:10px;color:#ececec;transform:rotate(-18deg)">刘燕7077</div>
<div class="t" style="left:257px;top:155px;font-size:9.5px;line-height:10px;color:#ececec;transform:rotate(-18deg)">刘燕7077</div>
<div class="t" style="left:363px;top:186px;font-size:9.5px;line-height:10px;color:#ececec;transform:rotate(-18deg)">刘燕7077</div>
<div class="t" style="left:89px;top:216px;font-size:9.5px;line-height:10px;color:#ececec;transform:rotate(-18deg)">刘燕7077</div>
<div class="t" style="left:300px;top:274px;font-size:9.5px;line-height:10px;color:#ececec;transform:rotate(-18deg)">刘燕7077</div>
<div class="t" style="left:26px;top:306px;font-size:9.5px;line-height:10px;color:#ececec;transform:rotate(-18deg)">刘燕7077</div>
<div class="t" style="left:132px;top:333px;font-size:9.5px;line-height:10px;color:#ececec;transform:rotate(-18deg)">刘燕7077</div>
<div class="t" style="left:-17px;top:186px;font-size:9.5px;line-height:10px;color:#ececec;transform:rotate(-18deg)">刘燕7077</div>
</div><div class="a" style="left:270px;top:464px;width:427px;height:156px;background:#fff"></div>
<div class="a" style="left:270px;top:463.8px;width:423px;height:0.9px;background:#ececec"></div>
<svg width="430" height="40" style="left:270px;top:460px" fill="none" stroke="#555" stroke-width="1.1" stroke-linecap="round" stroke-linejoin="round">
<circle cx="18.7" cy="17" r="5.8"/><path d="M15.8 18.3c.8 1.3 1.8 1.9 2.9 1.9s2.1-.6 2.9-1.9"/><circle cx="16.7" cy="15.3" r=".3" fill="#555"/><circle cx="20.7" cy="15.3" r=".3" fill="#555"/>
<circle cx="39.2" cy="20.2" r="2.1"/><circle cx="45" cy="20.2" r="2.1"/><path d="M40.3 18.4l5.5-7.3M44 18.4l-5.5-7.3M50.3 16.8l1.5 1.5 1.5-1.5"/>
<rect x="62.3" y="11.8" width="10.6" height="10.6" rx="1"/><path d="M62.8 20l3.2-3.2 2.6 2.2 4.2-3.6"/><circle cx="70.2" cy="14.6" r=".5" fill="#555"/>
<rect x="88.3" y="11.8" width="10.4" height="10.6" rx="1.5"/><path d="M90.8 15h5.4M90.8 17.3h5.4M90.8 19.6h3.4"/>
<rect x="112" y="11.8" width="10.8" height="10.6" rx="1.5"/><path d="M112 14.6h10.8"/><g fill="#555" stroke="none"><circle cx="114.8" cy="17.3" r=".55"/><circle cx="117.4" cy="17.3" r=".55"/><circle cx="120" cy="17.3" r=".55"/><circle cx="114.8" cy="20" r=".55"/><circle cx="117.4" cy="20" r=".55"/><circle cx="120" cy="20" r=".55"/></g>
<path d="M135.6 12.2h3.6l1.2 1.4h5.8v8.8h-10.6z"/><path d="M135.6 15.6h10.6"/><path d="M148.8 16.8l1.5 1.5 1.5-1.5"/>
<path d="M162 12.3c-.9.6-1.4 1.4-1 2.6.9 2.8 3 5.3 5.7 6.9 1.1.6 2.1.3 2.8-.6l.5-.8-2-1.4-1.2 1c-1.4-.8-2.6-2.2-3.3-3.8l1.1-1.1-1.3-2.2z"/><path d="M173.3 16.8l1.5 1.5 1.5-1.5"/>
<path d="M386.5 12.8h10.5c.5 0 .8.3.8.8v7.2c0 .5-.3.8-.8.8h-4l-1.3 1.4-1.3-1.4h-3.9c-.5 0-.8-.3-.8-.8v-7.2c0-.5.3-.8.8-.8z"/><path d="M391.2 15v2.6h2.6"/>
</svg>
<div class="a" style="left:676.4px;top:469.2px;width:16.2px;height:15.5px;background:#e9e9ec;border-radius:1px"></div>
<svg width="16" height="16" style="left:676.4px;top:469.2px" fill="none" stroke="#555" stroke-width="1.1"><rect x="3" y="4" width="10.4" height="8.5"/><path d="M5.6 4v8.5M7.8 6.2h3.6M7.8 8.2h3.6M7.8 10.2h3.6"/></svg>
<div class="a" style="left:288px;top:498px;width:1.2px;height:15.4px;background:#333"></div>
<div class="a" style="left:697px;top:113px;width:263px;height:507px;background:#eff2f7"></div>
<div class="a" style="left:696.8px;top:113px;width:0.8px;height:507px;background:#e8e8e8"></div>
<div class="a" style="left:697.6px;top:113px;width:262.4px;height:28.6px;background:#fff"></div>
<div class="t" style="left:741.7px;top:123.80px;font-size:10px;line-height:10px;color:#111;font-weight:400;-webkit-text-stroke:0.5px #111">CRM<span style="font-size:10px;letter-spacing:-0.3px">详情</span></div>
<div class="t" style="left:878.8px;top:123.70px;font-size:9.8px;line-height:9.8px;color:#444;font-weight:400;"><span style="font-size:10px;letter-spacing:-0.5px">自定义</span></div>
<div class="a" style="left:705.7px;top:149px;width:244.5px;height:217px;background:#fff;border-radius:3px;border:1px solid #e6eaf2"></div>
<div class="t" style="left:712.9px;top:157.78px;font-size:9.25px;line-height:9.25px;color:#3a4472;font-weight:400;"><span style="font-size:10px;letter-spacing:-0.5px">任我行咨询</span></div>
<svg width="14" height="14" style="left:933.0px;top:157.0px" fill="none" stroke="#8a8a8a" stroke-width="0.9"><path d="M5.5 1.8c1.7 0 2.8 1.3 2.8 3v2.6l1 1.2H1.7l1-1.2V4.8c0-1.7 1.1-3 2.8-3zM4.6 9.6c.2.4.5.6.9.6s.7-.2.9-.6M5.5 .9v.9"/><path d="M1 3.5c.3-.9.9-1.7 1.6-2.2M10 3.5c-.3-.9-.9-1.7-1.6-2.2"/></svg>
<div class="t" style="left:712.9px;top:178.78px;font-size:8.45px;line-height:8.45px;color:#9a9a9a;font-weight:400;"><span style="font-size:8px;letter-spacing:0.3px">地址</span>: <span style="font-size:8px;letter-spacing:0.3px">四川省成都市高新区德商国际</span>A<span style="font-size:8px;letter-spacing:0.3px">座</span></div>
<div class="t" style="left:712.9px;top:200.35px;font-size:8.1px;line-height:8.1px;color:#222;font-weight:700;"><span style="font-size:8px;letter-spacing:0.3px">统计数据</span>:</div>
<div class="t" style="left:712.9px;top:220.18px;font-size:8.45px;line-height:8.45px;color:#939393;font-weight:400;">ERP<span style="font-size:8px;letter-spacing:0.3px">应收</span>: ¥86836000.68</div>
<div class="t" style="left:712.9px;top:239.97px;font-size:8.45px;line-height:8.45px;color:#939393;font-weight:400;">ERP<span style="font-size:8px;letter-spacing:0.3px">销售总额</span>: ¥96836000.68</div>
<div class="t" style="left:712.9px;top:259.97px;font-size:8.45px;line-height:8.45px;color:#939393;font-weight:400;">ERP<span style="font-size:8px;letter-spacing:0.3px">收款总额</span>: ¥96836000.68</div>
<div class="t" style="left:712.9px;top:280.07px;font-size:8.45px;line-height:8.45px;color:#939393;font-weight:400;">ERP<span style="font-size:8px;letter-spacing:0.3px">上次销售时间</span>: 2022-02-08 14:23</div>
<div class="t" style="left:712.9px;top:300.17px;font-size:8.45px;line-height:8.45px;color:#939393;font-weight:400;">ERP<span style="font-size:8px;letter-spacing:0.3px">上次销售金额</span>: ¥66536221.68</div>
<div class="a" style="left:700.9px;top:191.6px;width:237px;height:122.4px;border:2px solid #d4302c;border-radius:4px"></div>
<div class="t" style="left:712.9px;top:326.65px;font-size:9.5px;line-height:9.5px;color:#3a4472;font-weight:400;"><span style="font-size:10px;letter-spacing:-0.5px">陈先生</span></div>
<svg width="14" height="14" style="left:933.0px;top:326.0px" fill="none" stroke="#8a8a8a" stroke-width="0.9"><path d="M5.5 1.8c1.7 0 2.8 1.3 2.8 3v2.6l1 1.2H1.7l1-1.2V4.8c0-1.7 1.1-3 2.8-3zM4.6 9.6c.2.4.5.6.9.6s.7-.2.9-.6M5.5 .9v.9"/><path d="M1 3.5c.3-.9.9-1.7 1.6-2.2M10 3.5c-.3-.9-.9-1.7-1.6-2.2"/></svg>
<div class="t" style="left:712.9px;top:348.85px;font-size:8.3px;line-height:8.3px;color:#9a9a9a;font-weight:400;">电话: <span style="color:#555">13566877897</span></div>
<div class="a" style="left:697.6px;top:375.6px;width:259.4px;height:28px;background:#fff"></div>
<div class="t" style="left:706px;top:384.20px;font-size:10.8px;line-height:10.8px;color:#222;font-weight:400;">最近联系</div>
<svg width="12" height="12" style="left:939px;top:383.5px" fill="none" stroke="#3c5a8a" stroke-width="1.1"><rect x="1" y="1.8" width="9.5" height="9" rx="1"/><path d="M1 4.3h9.5M3 6.5h4M3 8.5h2.5M3.2.5v2M8.2.5v2"/><path d="M8.8 8v3.2M7.2 9.6h3.2" stroke-width="1"/></svg>
<div class="a" style="left:697.6px;top:413.3px;width:259.4px;height:28.7px;background:#fff"></div>
<div class="t" style="left:706px;top:421.90px;font-size:10.8px;line-height:10.8px;color:#222;font-weight:400;">跟单</div>
<svg width="12" height="12" style="left:918.5px;top:421.5px" fill="none" stroke="#3c5a8a" stroke-width="1.1"><rect x="1" y="1.8" width="9.5" height="9" rx="1"/><path d="M1 4.3h9.5M3 6.5h4M3 8.5h2.5M3.2.5v2M8.2.5v2"/><path d="M8.8 8v3.2M7.2 9.6h3.2" stroke-width="1"/></svg>
<svg width="12" height="12" style="left:939px;top:421.5px" fill="none" stroke="#3c5a8a" stroke-width="1.1"><path d="M6 2.5c1.7 0 3 1.2 3 2.9 0 1.1-.6 1.8-1.2 2.4v1.5H4.2V7.8C3.6 7.2 3 6.5 3 5.4 3 3.7 4.3 2.5 6 2.5zM4.5 10.8h3"/><path d="M6 .2v1M.8 5.5h1M10.2 5.5h1M1.8 1.8l.7.7M10.2 1.8l-.7.7"/></svg>
<div class="a" style="left:697.6px;top:451.5px;width:262.4px;height:168.5px;background:#fff;border-radius:0 0 4px 0"></div>
<div class="t" style="left:706px;top:459.60px;font-size:10.8px;line-height:10.8px;color:#222;font-weight:400;">服务</div>
<svg width="12" height="12" style="left:939px;top:459px" fill="none" stroke="#3c5a8a" stroke-width="1.1"><rect x="1" y="1" width="9.5" height="10" rx=".8"/><path d="M3 3.5h5.5M3 5.8h5.5M3 8h3"/></svg>
<div class="a" style="left:697.6px;top:478.6px;width:259.4px;height:0.8px;background:#f0f0f0"></div>
<div class="a" style="left:956px;top:451.5px;width:0.8px;height:129px;background:#f0f0f0"></div>
<div class="t" style="left:709px;top:488.60px;font-size:8.8px;line-height:8.8px;color:#3a4472;font-weight:400;"><span style="font-size:9px;letter-spacing:-0.4px">系统使用不会</span></div>
<div class="t" style="left:922px;top:488.50px;font-size:9px;line-height:9px;color:#333;font-weight:400;">(&nbsp; 张鹏 )</div>
<div class="t" style="left:709px;top:507.50px;font-size:8.6px;line-height:8.6px;color:#a0a0a0;font-weight:400;">完成时间:&nbsp; 2022-02-08 14:23</div>
<div class="a" style="left:697.6px;top:525px;width:259.4px;height:0.8px;background:#f0f0f0"></div>
<div class="t" style="left:709px;top:533.75px;font-size:9.5px;line-height:9.5px;color:#3a4472;font-weight:400;"><span style="font-size:10px;letter-spacing:-0.3px">应用问题</span></div>
<div class="t" style="left:922px;top:534.00px;font-size:9px;line-height:9px;color:#333;font-weight:400;">(&nbsp; 张鹏 )</div>
<div class="t" style="left:709px;top:553.50px;font-size:8.6px;line-height:8.6px;color:#a0a0a0;font-weight:400;">完成时间:&nbsp; 2022-02-08 11:07</div>
<div class="a" style="left:697.6px;top:570px;width:259.4px;height:0.8px;background:#f3f3f3"></div>
<div class="a" style="left:697.6px;top:581.6px;width:262.4px;height:38.4px;background:#fff;border-radius:0 0 4px 0"></div>
<div class="a" style="left:697.6px;top:580.8px;width:262.4px;height:0.8px;background:#ececec"></div>
<svg width="14" height="14" style="left:756px;top:586px" fill="none" stroke="#333" stroke-width="1.1"><circle cx="7" cy="7" r="5.3"/><circle cx="7" cy="7" r="2.4"/><path d="M7 1.7v2.9M7 9.4v2.9"/></svg>
<div class="t" style="left:741.6px;top:605.00px;font-size:8.6px;line-height:8.6px;color:#222;font-weight:400;-webkit-text-stroke:0.12px #222">转入客户圈</div>
<svg width="14" height="14" style="left:887.5px;top:586px" fill="none" stroke="#333" stroke-width="1.1" stroke-linejoin="round"><path d="M7 1.5l5 2.6v5.8L7 12.5 2 9.9V4.1z"/><path d="M2 4.1l5 2.6 5-2.6M7 6.7v5.8"/></svg>
<div class="t" style="left:877px;top:605.00px;font-size:8.6px;line-height:8.6px;color:#222;font-weight:400;-webkit-text-stroke:0.12px #222">客户产品</div>
<div class="a" style="left:8px;top:619.8px;width:948px;height:2.2px;background:#a9a9a9"></div>
<div class="a" style="left:0px;top:622px;width:966px;height:1px;background:#f4f4f4"></div>
</body></html>
